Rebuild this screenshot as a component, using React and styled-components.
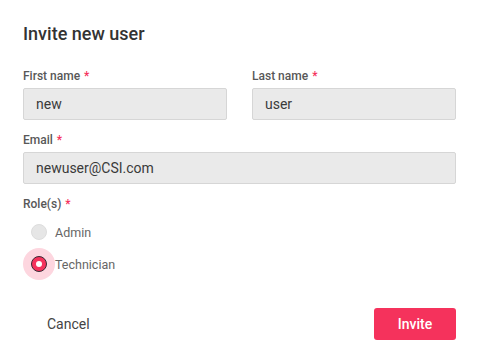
import React, { useState } from 'react';
import styled, { createGlobalStyle } from 'styled-components';

const GlobalStyle = createGlobalStyle`
	* {
		box-sizing: border-box;
	}
	body {
		margin: 0;
		background: #ffffff;
		font-family: Roboto, 'Liberation Sans', Arial, sans-serif;
	}
`;

const ROLES = ['Admin', 'Technician'];

const App = () => {
	const [role, setRole] = useState('Technician');

	return (
		<>
			<GlobalStyle />
			<Dialog>
				<Title>Invite new user</Title>
				<Row>
					<Field>
						<Label>
							First name <Required>*</Required>
						</Label>
						<Input defaultValue="new" />
					</Field>
					<Field>
						<Label>
							Last name <Required>*</Required>
						</Label>
						<Input defaultValue="user" />
					</Field>
				</Row>
				<Field>
					<Label>
						Email <Required>*</Required>
					</Label>
					<Input defaultValue="newuser@CSI.com" />
				</Field>
				<Field>
					<Label>
						Role(s) <Required>*</Required>
					</Label>
					<RoleList>
						{ROLES.map((name) => (
							<RoleOption key={name} onClick={() => setRole(name)}>
								<Halo $active={role === name}>
									<Radio $checked={role === name} />
								</Halo>
								<RoleName>{name}</RoleName>
							</RoleOption>
						))}
					</RoleList>
				</Field>
				<Footer>
					<CancelButton>Cancel</CancelButton>
					<InviteButton>Invite</InviteButton>
				</Footer>
			</Dialog>
		</>
	);
};

const Dialog = styled.div`
	width: 480px;
	height: 352px;
	padding: 22px 24px 0 23px;
	display: flex;
	flex-direction: column;
	gap: 12px;
`;

const Title = styled.h2`
	margin: 0 0 10px;
	font-size: 18px;
	line-height: 24px;
	font-weight: 500;
	color: #333333;
`;

const Row = styled.div`
	display: grid;
	grid-template-columns: 1fr 1fr;
	column-gap: 25px;
`;

const Field = styled.div`
	display: flex;
	flex-direction: column;
	gap: 4px;
`;

const Label = styled.label`
	font-size: 12px;
	line-height: 16px;
	font-weight: 500;
	color: #585858;
`;

const Required = styled.span`
	color: #f5325c;
	margin-left: 1px;
`;

const Input = styled.input`
	height: 32px;
	width: 100%;
	padding: 0 12px;
	background: #eaeaea;
	border: 1px solid #d6d6d6;
	border-radius: 2px;
	font-family: inherit;
	font-size: 14px;
	color: #3a3a3a;
	outline: none;
`;

const RoleList = styled.div`
	display: flex;
	flex-direction: column;
`;

const RoleOption = styled.div`
	display: flex;
	align-items: center;
	height: 32px;
	cursor: pointer;
`;

const Halo = styled.span`
	width: 32px;
	height: 32px;
	border-radius: 50%;
	display: flex;
	align-items: center;
	justify-content: center;
	background: ${(p) => (p.$active ? '#fdd6df' : 'transparent')};
`;

const Radio = styled.span`
	width: 16px;
	height: 16px;
	border-radius: 50%;
	display: flex;
	align-items: center;
	justify-content: center;
	background: ${(p) => (p.$checked ? '#f5325c' : '#e6e6e6')};
	border: ${(p) => (p.$checked ? '1.5px solid #3a2a35' : '1px solid #dddddd')};

	&::after {
		content: '';
		width: 6px;
		height: 6px;
		border-radius: 50%;
		background: #ffffff;
		display: ${(p) => (p.$checked ? 'block' : 'none')};
	}
`;

const RoleName = styled.span`
	font-size: 12.5px;
	color: #666666;
`;

const Footer = styled.div`
	margin-top: 16px;
	display: flex;
	justify-content: space-between;
	align-items: center;
`;

const CancelButton = styled.button`
	height: 32px;
	padding: 0 24px;
	background: transparent;
	border: none;
	font-family: inherit;
	font-size: 14px;
	color: #444444;
	cursor: pointer;
`;

const InviteButton = styled.button`
	height: 32px;
	width: 82px;
	background: #f5325c;
	border: none;
	border-radius: 3px;
	font-family: inherit;
	font-size: 14px;
	font-weight: 500;
	color: #ffffff;
	cursor: pointer;
`;

export default App;
